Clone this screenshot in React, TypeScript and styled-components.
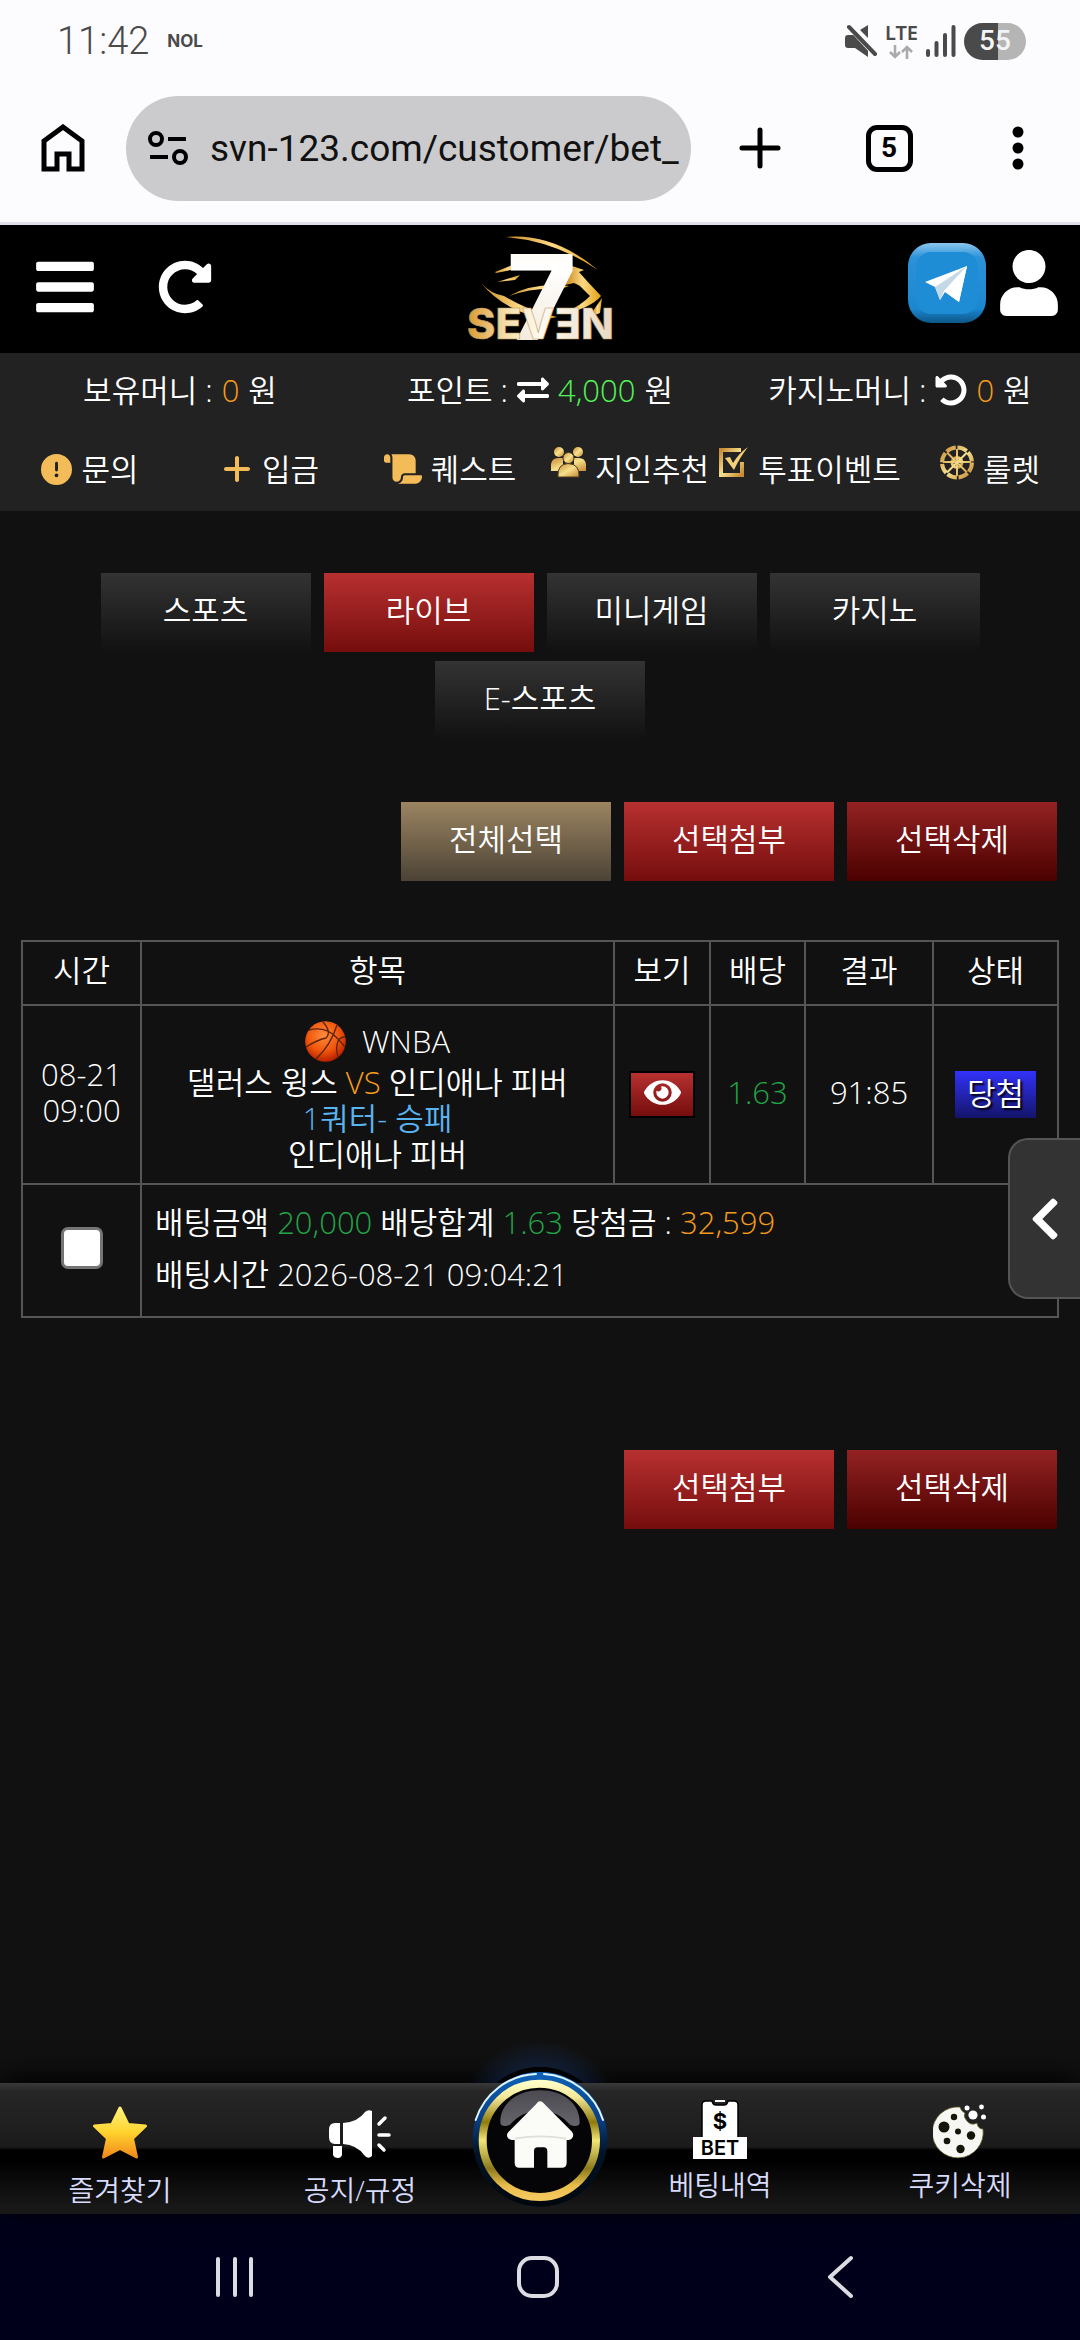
import React, { useState } from "react";
import styled, { createGlobalStyle, css } from "styled-components";
import { FaBars, FaUser, FaExchangeAlt, FaChevronLeft, FaEye, FaRedoAlt, FaUndoAlt } from "react-icons/fa";
import { FaCircleExclamation, FaPlus, FaScroll } from "react-icons/fa6";

const korean = `"Open Sans", "Noto Sans CJK KR", sans-serif`;

const GlobalStyle = createGlobalStyle`
  *, *::before, *::after { box-sizing: border-box; }
  html, body { margin: 0; padding: 0; background: #111; }
  body { font-family: ${korean}; font-weight: 350; font-size: 31px; line-height: 36px; color: #fff; }
  button, input { font: inherit; color: inherit; margin: 0; }
  button { padding: 0; border: 0; background: none; cursor: pointer; }
  a { color: inherit; text-decoration: none; }
  svg { display: block; flex: none; }
`;

const Page = styled.div`
  min-height: 100vh;
  display: flex;
  flex-direction: column;
  background: #111;
`;

/* ---------- phone status bar ---------- */

const StatusBar = styled.div`
  display: flex;
  align-items: center;
  justify-content: space-between;
  height: 82px;
  padding: 0 54px 0 57px;
  background: #fcfcff;
  color: #4a4a4a;
  font-family: Roboto, sans-serif;
`;

const StatusGroup = styled.div<{ $gap: number }>`
  display: flex;
  align-items: center;
  gap: ${(p) => p.$gap}px;
`;

const Clock = styled.span`
  font-size: 38px;
  font-weight: 300;
`;

const Carrier = styled.span`
  font-family: Inter, sans-serif;
  font-size: 17px;
  font-weight: 700;
`;

const Network = styled.div`
  display: flex;
  flex-direction: column;
  align-items: center;
  gap: 3px;
  font-family: "Noto Sans", sans-serif;
  font-size: 20px;
  font-weight: 600;
  line-height: 18px;
`;

const Battery = styled.div`
  display: flex;
  align-items: center;
  justify-content: center;
  width: 62px;
  height: 37px;
  border-radius: 19px;
  background: linear-gradient(90deg, #4a4a4a 55%, #b5b5b5 55%);
  color: #f4f4f4;
  font-size: 28px;
  font-weight: 500;
`;

/* ---------- browser toolbar ---------- */

const Browser = styled.div`
  display: flex;
  align-items: center;
  justify-content: space-between;
  height: 143px;
  padding: 0 37px 8px 38px;
  background: #fcfcff;
  border-bottom: 3px solid #e1e1ec;
`;

const BrowserGroup = styled.div<{ $gap: number; $grow?: boolean }>`
  display: flex;
  align-items: center;
  flex: ${(p) => (p.$grow ? "1 1 0" : "none")};
  min-width: 0;
  gap: ${(p) => p.$gap}px;
`;

const BrowserButton = styled.button`
  display: grid;
  place-items: center;
  flex: none;
  width: 50px;
  height: 64px;
`;

const AddressBar = styled.label`
  display: flex;
  align-items: center;
  gap: 22px;
  flex: 0 1 565px;
  min-width: 0;
  height: 105px;
  padding: 0 8px 0 22px;
  border-radius: 53px;
  background: #cbcbcd;
`;

const AddressInput = styled.input`
  flex: 1;
  min-width: 0;
  height: 60px;
  padding: 0;
  border: 0;
  outline: 0;
  background: transparent;
  color: #111;
  font-family: Roboto, sans-serif;
  font-size: 37px;
  font-weight: 400;
`;

const TabCount = styled.span`
  display: grid;
  place-items: center;
  width: 47px;
  height: 47px;
  border: 5px solid #000;
  border-radius: 11px;
  color: #000;
  font-family: Roboto, sans-serif;
  font-size: 28px;
  font-weight: 700;
`;

/* ---------- site header ---------- */

const Header = styled.header`
  display: grid;
  grid-template-columns: 1fr auto 1fr;
  align-items: center;
  height: 128px;
  padding: 0 18px;
  background: #000;
`;

const HeaderSide = styled.div<{ $end?: boolean; $gap: number }>`
  display: flex;
  align-items: center;
  justify-content: ${(p) => (p.$end ? "flex-end" : "flex-start")};
  gap: ${(p) => p.$gap}px;
  padding: ${(p) => (p.$end ? "0 0 12px" : "0 0 4px 14px")};
`;

const IconButton = styled.button`
  display: grid;
  place-items: center;
`;

const Account = styled.section`
  padding: 13px 0;
  background: #222;
`;

const BalanceRow = styled.div`
  display: grid;
  grid-template-columns: repeat(3, 1fr);
  height: 48px;
`;

const Balance = styled.div`
  display: flex;
  align-items: center;
  justify-content: center;
  gap: 9px;
  white-space: nowrap;
`;

const Amount = styled.span<{ $color: string }>`
  color: ${(p) => p.$color};
`;

const QuickRow = styled.nav`
  display: grid;
  grid-template-columns: repeat(6, minmax(0, 1fr));
  height: 84px;
  padding-top: 24px;
`;

const QuickLink = styled.a<{ $raised?: boolean }>`
  display: flex;
  align-items: center;
  justify-content: center;
  gap: 9px;
  height: 62px;
  white-space: nowrap;
  svg { color: #f3bc58; margin-bottom: ${(p) => (p.$raised ? 14 : 0)}px; }
`;

/* ---------- content ---------- */

const Main = styled.main`
  flex: 1;
  display: flex;
  flex-direction: column;
  padding: 62px 21px 0;
`;

type Tone = "dark" | "red" | "tan" | "maroon";
const tones: Record<Tone, string> = {
  dark: "linear-gradient(#333, #111)",
  red: "linear-gradient(#b83030, #750d0d)",
  tan: "linear-gradient(#9b8461, #4c4336)",
  maroon: "linear-gradient(#942222, #4b0000)",
};

const PanelButton = styled.button<{ $tone: Tone }>`
  flex: none;
  width: 210px;
  height: 79px;
  padding-bottom: 6px;
  background: ${(p) => tones[p.$tone]};
`;

const Categories = styled.div`
  display: flex;
  flex-wrap: wrap;
  justify-content: center;
  gap: 9px 13px;
  padding: 0 70px;
`;

const Actions = styled.div<{ $top: number }>`
  display: flex;
  justify-content: flex-end;
  gap: 13px;
  margin-top: ${(p) => p.$top}px;
  padding-right: 2px;
`;

const BetTable = styled.table`
  width: 100%;
  margin-top: 59px;
  border-collapse: collapse;
  table-layout: fixed;
`;

const cell = css`
  border: 2px solid #555;
  padding: 0;
  text-align: center;
  font-weight: 350;
`;

const Th = styled.th<{ $width?: number }>`
  ${cell}
  width: ${(p) => (p.$width ? `${p.$width}px` : "auto")};
  height: 64px;
  padding-bottom: 6px;
`;

const Td = styled.td<{ $lift?: boolean }>`
  ${cell}
  padding-bottom: ${(p) => (p.$lift ? 6 : 0)}px;
`;

const ItemCell = styled(Td)`
  padding: 12px 0 11px;
`;

const League = styled.div`
  display: flex;
  align-items: center;
  justify-content: center;
  gap: 16px;
  height: 46px;
`;

const ViewButton = styled.button`
  display: inline-grid;
  place-items: center;
  width: 66px;
  height: 47px;
  padding-bottom: 4px;
  border: 2px solid #000;
  background: ${tones.red};
  vertical-align: middle;
`;

const WonBadge = styled.span`
  display: inline-block;
  padding: 0 12px 3px;
  background: linear-gradient(#3232fa, #14146a);
  line-height: 44px;
  text-shadow: 2px 2px 2px #000;
  vertical-align: middle;
`;

const SummaryCell = styled(Td)`
  padding: 11px 13px 16px;
  text-align: left;
  line-height: 52px;
`;

const PickBox = styled.input`
  appearance: none;
  width: 42px;
  height: 42px;
  border: 3px solid #757575;
  border-radius: 7px;
  background: #fff;
  vertical-align: middle;
  &:checked { background: #1a73e8; }
`;

const Drawer = styled.button`
  position: absolute;
  right: 0;
  top: 1138px;
  display: grid;
  place-items: center;
  width: 72px;
  height: 161px;
  border: 2px solid #555;
  border-right: 0;
  border-radius: 20px 0 0 20px;
  background: #333;
`;

/* ---------- bottom bars ---------- */

const BottomNav = styled.nav`
  position: relative;
  display: grid;
  grid-template-columns: 2fr 2fr 1fr 2fr 2fr;
  height: 131px;
  background: linear-gradient(#3a3a3a 0, #262626 8px, #1b1b1b 64px, #000 67px, #000 76px, #181818 125px);
  box-shadow: 0 -6px 26px #000;
  color: #d8dbfb;
  font-size: 28px;
`;

const NavItem = styled.a<{ $gap: number }>`
  display: flex;
  flex-direction: column;
  align-items: center;
  gap: ${(p) => p.$gap}px;
  padding-top: 16px;
  white-space: nowrap;
`;

const NavIcon = styled.span`
  display: flex;
  align-items: flex-end;
  height: 60px;
`;

const HomeButton = styled.a`
  position: absolute;
  left: calc(50% - 80px);
  top: -23px;
  width: 160px;
  height: 160px;
`;

const SystemNav = styled.div`
  display: flex;
  align-items: center;
  justify-content: space-between;
  height: 126px;
  padding: 0 209px 0 204px;
  background: #00001a;
`;

const SystemButton = styled.button`
  display: grid;
  place-items: center;
  width: 62px;
  height: 62px;
`;

/* ---------- drawings ---------- */

const MuteIcon = () => (
  <svg width="32" height="34" viewBox="0 0 32 34" aria-hidden="true">
    <path d="M0 14q0-3 3-3h6l14 14v8L10 24H3q-3 0-3-3zM23 1v13l-8-8z" fill="#4a4a4a" />
    <path d="M5 3l26 28" stroke="#fcfcff" strokeWidth="6" />
    <path d="M4 3l26 27" stroke="#4a4a4a" strokeWidth="4" strokeLinecap="round" />
  </svg>
);

const DataArrows = () => (
  <svg width="24" height="14" viewBox="0 0 24 14" aria-hidden="true" fill="none" stroke="#aaa" strokeWidth="2.6">
    <path d="M6 0v12M1 7l5 5 5-5M18 14V2M13 7l5-5 5 5" />
  </svg>
);

const SignalIcon = () => (
  <svg width="30" height="32" viewBox="0 0 30 32" aria-hidden="true" stroke="#4a4a4a" strokeWidth="4" strokeLinecap="round">
    <path d="M2 26v4M10.500 18v12M19 10v20M27.500 2v28" />
  </svg>
);

const HomeOutline = () => (
  <svg width="44" height="48" viewBox="0 0 44 48" aria-hidden="true" fill="none" stroke="#000" strokeWidth="5">
    <path d="M3 17L22 3l19 14v28H28V30H16v15H3z" />
  </svg>
);

const SiteInfoIcon = () => (
  <svg width="40" height="34" viewBox="0 0 40 34" aria-hidden="true" fill="none" stroke="#000" strokeWidth="4">
    <circle cx="8" cy="8" r="6" />
    <path d="M20 8h18M2 26h18" />
    <circle cx="32" cy="26" r="6" />
  </svg>
);

const NewTabIcon = () => (
  <svg width="42" height="42" viewBox="0 0 42 42" aria-hidden="true" stroke="#000" strokeWidth="5" strokeLinecap="round">
    <path d="M21 3v36M3 21h36" />
  </svg>
);

const MoreIcon = () => (
  <svg width="12" height="44" viewBox="0 0 12 44" aria-hidden="true">
    <circle cx="6" cy="6" r="5.500" />
    <circle cx="6" cy="22" r="5.500" />
    <circle cx="6" cy="38" r="5.500" />
  </svg>
);

const Logo = () => (
  <svg width="170" height="128" viewBox="0 0 170 128" overflow="visible" role="img" aria-label="7 SEVEN">
    <defs>
      <linearGradient id="gold" x1="0" x2="1">
        <stop offset="0" stopColor="#d9982c" />
        <stop offset=".25" stopColor="#f3dca6" />
        <stop offset=".5" stopColor="#fffaf0" />
        <stop offset="1" stopColor="#e9d9c4" />
      </linearGradient>
      <linearGradient id="pearl" x1="0" y1="0" x2="0" y2="1">
        <stop offset="0" stopColor="#fff6e8" />
        <stop offset=".3" stopColor="#fff" />
        <stop offset="1" stopColor="#efe2cf" />
      </linearGradient>
      <linearGradient id="flare" x1="0" x2="1">
        <stop offset="0" stopColor="#c8891c" />
        <stop offset=".5" stopColor="#ffd985" />
        <stop offset="1" stopColor="#e0a012" />
      </linearGradient>
    </defs>
    <g fill="url(#flare)">
      <path d="M51 12q48-4 92 33-43-29-92-33z" />
      <path d="M40 47l20-8-2 3 8 1-25 5zM42 57l23-7-5 5z" />
      <path d="M26 58q10 11 23 13 20 12 38 17l15 4-10 2q-42-7-66-36z" />
      <path d="M54 71q25-14 60-10l-8 3q-28-2-52 7z" />
      <path d="M114 40l15 5-5 2 8 9 14 15-27-13-9 2z" />
      <path d="M124 60q12 2 22 11-10 12-38 18 20-10 27-18z" />
      <path d="M138 86l9-13-2 15-5 2z" />
    </g>
    <text x="52" y="115" fontFamily="Inter, sans-serif" fontWeight="800" fontSize="118" fill="url(#pearl)">7</text>
    <text x="12" y="114" fontFamily="Inter, sans-serif" fontWeight="800" fontSize="43" fill="url(#gold)" stroke="#b99a66" strokeWidth=".6">SEVƎN</text>
  </svg>
);

const TelegramIcon = () => (
  <svg width="78" height="80" viewBox="0 0 78 80" aria-hidden="true">
    <defs>
      <linearGradient id="tg" x1="0" y1="0" x2="0" y2="1">
        <stop offset="0" stopColor="#8cc6ee" />
        <stop offset=".18" stopColor="#2c92d9" />
        <stop offset=".82" stopColor="#1b87d0" />
        <stop offset="1" stopColor="#0d5688" />
      </linearGradient>
    </defs>
    <rect width="78" height="80" rx="23" fill="url(#tg)" />
    <rect x="8" y="9" width="62" height="62" rx="15" fill="#1e8dd6" />
    <path d="M17 39L59 23l-8 36-14-10-5 8-5-13z" fill="#fff" />
    <path d="M27 44l32-21-23 25-4 9z" fill="#c4d8e8" />
    <path d="M59 23L36 48l15 11z" fill="#fff" />
  </svg>
);

const GoldDefs = () => (
  <defs>
    <linearGradient id="goldIcon" x1="0" y1="0" x2="1" y2="1">
      <stop offset="0" stopColor="#c98b35" />
      <stop offset=".5" stopColor="#f7e08c" />
      <stop offset="1" stopColor="#c58a34" />
    </linearGradient>
  </defs>
);

const FriendsIcon = () => (
  <svg width="35" height="31" viewBox="0 0 35 31" aria-hidden="true" fill="url(#goldIcon)">
    <GoldDefs />
    <circle cx="8" cy="5" r="5" />
    <circle cx="27" cy="5" r="5" />
    <path d="M0 24V17q1-6 7-6h5v13zM35 24V17q-1-6-7-6h-5v13z" />
    <g stroke="#4c3a1c" strokeWidth="1">
      <circle cx="17.500" cy="11" r="5.500" />
      <path d="M7 30q-1-13 10-13.500Q29 17 28 30z" />
    </g>
  </svg>
);

const VoteIcon = () => (
  <svg width="30" height="31" viewBox="0 0 30 31" aria-hidden="true">
    <path d="M22 3H2v25h21V15" fill="none" stroke="url(#goldIcon)" strokeWidth="4" />
    <path d="M6 11l5-1 3 6Q20 6 29 0q-8 10-14 23z" fill="#f2cf78" />
  </svg>
);

const RouletteIcon = () => (
  <svg width="34" height="35" viewBox="0 0 34 35" aria-hidden="true" fill="none" stroke="url(#goldIcon)">
    <circle cx="17" cy="17.500" r="15" strokeWidth="4" strokeDasharray="10 1.780" />
    <circle cx="17" cy="17.500" r="5" strokeWidth="3" />
    <path d="M17 4v27M3 17h28M7 7.500l20 20M27 7.500l-20 20" strokeWidth="2" />
    <circle cx="17" cy="17.500" r="2" fill="#f7e08c" />
  </svg>
);

const Basketball = () => (
  <svg width="41" height="41" viewBox="0 0 41 41" aria-hidden="true">
    <defs>
      <radialGradient id="ball" cx=".45" cy=".35" r=".65">
        <stop offset="0" stopColor="#ff8a3c" />
        <stop offset=".6" stopColor="#f0560c" />
        <stop offset="1" stopColor="#b81f00" />
      </radialGradient>
    </defs>
    <circle cx="20.500" cy="20.500" r="20.300" fill="url(#ball)" />
    <path d="M32 4Q26 24 11 38M1 26Q12 19 21 17 27 11 18 1M4 9q16-4 27 7 6 6 9 10M40 16q-7 0-8 8-1 5 1 12" fill="none" stroke="#5a2408" strokeWidth="1.300" />
  </svg>
);

const StarIcon = () => (
  <svg width="56" height="54" viewBox="0 0 56 54" aria-hidden="true">
    <defs>
      <linearGradient id="star" x1="0" y1="0" x2="0" y2="1">
        <stop offset="0" stopColor="#fff27a" />
        <stop offset=".5" stopColor="#ffd32e" />
        <stop offset="1" stopColor="#f08a1c" />
      </linearGradient>
    </defs>
    <path d="M28 3l8 16.500 17.500 1.500-13 12.500L44.500 52 28 43.500 11.500 52l4-18.500L2.500 21 20 19.500z" fill="url(#star)" stroke="url(#star)" strokeWidth="3" strokeLinejoin="round" />
  </svg>
);

const MegaphoneIcon = () => (
  <svg width="64" height="50" viewBox="0 0 64 50" aria-hidden="true" fill="#fff">
    <path d="M12 14v21H7q-6 0-6-7v-7q0-7 6-7zM5 37h9v9q-1 3-4 3-4 0-5-3zM15 14q15-1 22-11 3-3 7-1v45q-4 4-8-1-7-10-21-11z" />
    <path d="M51 15l6-6M51 26h10M51 36l5 5" stroke="#fff" strokeWidth="3.500" strokeLinecap="round" />
  </svg>
);

const BetIcon = () => (
  <svg width="54" height="59" viewBox="0 0 54 59" aria-hidden="true">
    <path d="M9 38V5q0-4 4-4h6q1 4 4 4h8q3 0 4-4h6q4 0 4 4v33z" fill="#fff" stroke="#000" strokeWidth="1.500" />
    <path d="M22 1h10" stroke="#fff" strokeWidth="2" />
    <text x="27" y="29" textAnchor="middle" fontFamily="Inter, sans-serif" fontWeight="700" fontSize="22" fill="#000">$</text>
    <rect x="0" y="37" width="54" height="22" fill="#fff" />
    <text x="27" y="55" textAnchor="middle" fontFamily="Inter, sans-serif" fontWeight="600" fontSize="20" fill="#000">BET</text>
  </svg>
);

const CookieIcon = () => (
  <svg width="54" height="55" viewBox="0 0 54 55" aria-hidden="true">
    <path d="M27 3A25.500 25.500 0 1 0 50 25q-5 0-6-6-6 3-10-2-4-4-2-8-4-2-5-6z" fill="#f6f6f2" stroke="#5d5520" strokeWidth=".8" />
    <g fill="#15150a">
      <circle cx="11" cy="23" r="5.500" />
      <circle cx="21" cy="13" r="3.200" />
      <circle cx="25" cy="27.500" r="3" />
      <circle cx="38" cy="31.500" r="4.200" />
      <circle cx="14" cy="37" r="3.300" />
      <circle cx="27.500" cy="45" r="4.200" />
    </g>
    <g fill="#fff">
      <circle cx="40" cy="11" r="4.600" />
      <circle cx="34" cy="4" r="2.500" />
      <circle cx="48.500" cy="3" r="2.400" />
      <circle cx="50.500" cy="13" r="2.500" />
    </g>
  </svg>
);

const HomeBadge = () => (
  <svg width="160" height="160" viewBox="0 0 480 480" aria-hidden="true" overflow="visible">
    <defs>
      <radialGradient id="glow">
        <stop offset=".7" stopColor="#1c4ea8" stopOpacity=".45" />
        <stop offset="1" stopColor="#1c4ea8" stopOpacity="0" />
      </radialGradient>
      <linearGradient id="rim" x1="0" y1="0" x2="0" y2="1">
        <stop offset="0" stopColor="#0e63b8" />
        <stop offset=".35" stopColor="#0a3f86" />
        <stop offset=".6" stopColor="#021428" />
        <stop offset="1" stopColor="#01060c" />
      </linearGradient>
      <linearGradient id="ring" x1="0" y1="0" x2="0" y2="1">
        <stop offset="0" stopColor="#fffcc4" />
        <stop offset=".12" stopColor="#f4e896" />
        <stop offset=".34" stopColor="#8f7a0c" />
        <stop offset=".5" stopColor="#f2e676" />
        <stop offset=".75" stopColor="#8c7a1c" />
        <stop offset=".9" stopColor="#e9bd4c" />
        <stop offset="1" stopColor="#f3c75c" />
      </linearGradient>
      <linearGradient id="gloss" x1="0" y1="0" x2="0" y2="1">
        <stop offset="0" stopColor="#4c4a50" />
        <stop offset="1" stopColor="#66656c" />
      </linearGradient>
      <clipPath id="above">
        <rect x="-60" y="-60" width="600" height="128" />
      </clipPath>
    </defs>
    <g clipPath="url(#above)">
      <circle cx="240" cy="190" r="250" fill="url(#glow)" opacity=".5" />
      <circle cx="240" cy="225" r="204" fill="#020203" />
    </g>
    <circle cx="240" cy="238" r="202" fill="url(#rim)" />
    <path d="M47 180A198 198 0 0 1 228 42M252 42a198 198 0 0 1 177 138" fill="none" stroke="#dff6ff" strokeWidth="6" strokeLinecap="round" />
    <circle cx="238" cy="241" r="170" fill="#050507" stroke="url(#ring)" strokeWidth="24" />
    <path d="M121 188C120 130 172 91 240 91s120 39 119 97c-1 11-14 12-28 7-26-28-50-41-91-41s-65 13-91 41c-14 5-27 4-28-7z" fill="url(#gloss)" />
    <path d="M240 124c6 0 10 5 16 11l80 80c8 10 2 24-10 25h-6v68c0 10-5 15-14 15h-44v-48c0-10-4-13-12-13h-16c-8 0-12 3-12 13v48h-44c-10 0-14-5-14-15v-68h-8c-14-1-20-15-10-25l80-80c6-6 8-11 14-11z" fill="#fbfcf8" />
    <path d="M165 236q75-14 153 0" fill="none" stroke="#dfe0da" strokeWidth="5" />
  </svg>
);

const RecentsIcon = () => (
  <svg width="40" height="42" viewBox="0 0 40 42" aria-hidden="true" stroke="#dcdce2" strokeWidth="4" strokeLinecap="round">
    <path d="M3 3v36M20 3v36M36 3v36" />
  </svg>
);

const SystemHomeIcon = () => (
  <svg width="42" height="42" viewBox="0 0 42 42" aria-hidden="true">
    <rect x="2" y="2" width="38" height="38" rx="13" fill="none" stroke="#dcdce2" strokeWidth="4" />
  </svg>
);

const BackIcon = () => (
  <svg width="28" height="44" viewBox="0 0 28 44" aria-hidden="true" fill="none" stroke="#dcdce2" strokeWidth="4" strokeLinecap="round" strokeLinejoin="round">
    <path d="M25 3L4 22l21 19" />
  </svg>
);

/* ---------- page ---------- */

const categories = ["스포츠", "라이브", "미니게임", "카지노", "E-스포츠"];

export default function App() {
  const [category, setCategory] = useState("라이브");
  const [picked, setPicked] = useState(false);

  return (
    <>
      <GlobalStyle />
      <Page>
        <StatusBar>
          <StatusGroup $gap={18}>
            <Clock>11:42</Clock>
            <Carrier>NOL</Carrier>
          </StatusGroup>
          <StatusGroup $gap={8}>
            <MuteIcon />
            <Network>
              LTE
              <DataArrows />
            </Network>
            <SignalIcon />
            <Battery>55</Battery>
          </StatusGroup>
        </StatusBar>

        <Browser>
          <BrowserGroup $gap={38} $grow>
            <BrowserButton aria-label="홈"><HomeOutline /></BrowserButton>
            <AddressBar>
              <SiteInfoIcon />
              <AddressInput aria-label="주소" defaultValue="svn-123.com/customer/bet_" />
            </AddressBar>
          </BrowserGroup>
          <BrowserGroup $gap={79}>
            <BrowserButton aria-label="새 탭"><NewTabIcon /></BrowserButton>
            <BrowserButton aria-label="탭 목록"><TabCount>5</TabCount></BrowserButton>
            <BrowserButton aria-label="더보기"><MoreIcon /></BrowserButton>
          </BrowserGroup>
        </Browser>

        <Header>
          <HeaderSide $gap={60}>
            <IconButton aria-label="메뉴"><FaBars size={66} /></IconButton>
            <IconButton aria-label="새로고침"><FaRedoAlt size={54} /></IconButton>
          </HeaderSide>
          <a href="#home"><Logo /></a>
          <HeaderSide $end $gap={10}>
            <IconButton aria-label="텔레그램"><TelegramIcon /></IconButton>
            <IconButton aria-label="내 정보"><FaUser size={66} /></IconButton>
          </HeaderSide>
        </Header>

        <Account>
          <BalanceRow>
            <Balance>보유머니 : <Amount $color="#f59b1c">0</Amount> 원</Balance>
            <Balance>포인트 : <FaExchangeAlt size={32} /> <Amount $color="#52f556">4,000</Amount> 원</Balance>
            <Balance>카지노머니 : <FaUndoAlt size={32} /> <Amount $color="#f59b1c">0</Amount> 원</Balance>
          </BalanceRow>
          <QuickRow>
            <QuickLink href="#inquiry"><FaCircleExclamation size={31} />문의</QuickLink>
            <QuickLink href="#deposit"><FaPlus size={32} />입금</QuickLink>
            <QuickLink href="#quest"><FaScroll size={38} />퀘스트</QuickLink>
            <QuickLink href="#friends" $raised><FriendsIcon />지인추천</QuickLink>
            <QuickLink href="#vote" $raised><VoteIcon />투표이벤트</QuickLink>
            <QuickLink href="#roulette" $raised><RouletteIcon />룰렛</QuickLink>
          </QuickRow>
        </Account>

        <Main>
          <Categories>
            {categories.map((name) => (
              <PanelButton key={name} $tone={name === category ? "red" : "dark"} onClick={() => setCategory(name)}>
                {name}
              </PanelButton>
            ))}
          </Categories>

          <Actions $top={62}>
            <PanelButton $tone="tan" onClick={() => setPicked(true)}>전체선택</PanelButton>
            <PanelButton $tone="red">선택첨부</PanelButton>
            <PanelButton $tone="maroon">선택삭제</PanelButton>
          </Actions>

          <BetTable>
            <thead>
              <tr>
                <Th $width={119}>시간</Th>
                <Th>항목</Th>
                <Th $width={96}>보기</Th>
                <Th $width={95}>배당</Th>
                <Th $width={128}>결과</Th>
                <Th $width={125}>상태</Th>
              </tr>
            </thead>
            <tbody>
              <tr>
                <Td $lift>08-21<br />09:00</Td>
                <ItemCell>
                  <League><Basketball />WNBA</League>
                  댈러스 윙스 <Amount $color="#f59b1c">VS</Amount> 인디애나 피버<br />
                  <Amount $color="#5ab4f0">1쿼터- 승패</Amount><br />
                  인디애나 피버
                </ItemCell>
                <Td><ViewButton aria-label="보기"><FaEye size={37} /></ViewButton></Td>
                <Td $lift><Amount $color="#22a447">1.63</Amount></Td>
                <Td $lift>91:85</Td>
                <Td><WonBadge>당첨</WonBadge></Td>
              </tr>
              <tr>
                <Td $lift>
                  <PickBox type="checkbox" aria-label="선택" checked={picked} onChange={(e) => setPicked(e.target.checked)} />
                </Td>
                <SummaryCell colSpan={5}>
                  배팅금액 <Amount $color="#22a447">20,000</Amount> 배당합계 <Amount $color="#22a447">1.63</Amount> 당첨금 : <Amount $color="#f59b1c">32,599</Amount><br />
                  배팅시간 2026-08-21 09:04:21
                </SummaryCell>
              </tr>
            </tbody>
          </BetTable>

          <Actions $top={132}>
            <PanelButton $tone="red">선택첨부</PanelButton>
            <PanelButton $tone="maroon">선택삭제</PanelButton>
          </Actions>
        </Main>

        <Drawer aria-label="열기"><FaChevronLeft size={48} /></Drawer>

        <BottomNav>
          <NavItem href="#favorites" $gap={13}><NavIcon><StarIcon /></NavIcon>즐겨찾기</NavItem>
          <NavItem href="#notice" $gap={13}><NavIcon><MegaphoneIcon /></NavIcon>공지/규정</NavItem>
          <span />
          <NavItem href="#bets" $gap={8}><NavIcon><BetIcon /></NavIcon>베팅내역</NavItem>
          <NavItem href="#cookies" $gap={8}><NavIcon><CookieIcon /></NavIcon>쿠키삭제</NavItem>
          <HomeButton href="#home" aria-label="홈으로"><HomeBadge /></HomeButton>
        </BottomNav>

        <SystemNav>
          <SystemButton aria-label="최근 앱"><RecentsIcon /></SystemButton>
          <SystemButton aria-label="홈 화면"><SystemHomeIcon /></SystemButton>
          <SystemButton aria-label="뒤로"><BackIcon /></SystemButton>
        </SystemNav>
      </Page>
    </>
  );
}
